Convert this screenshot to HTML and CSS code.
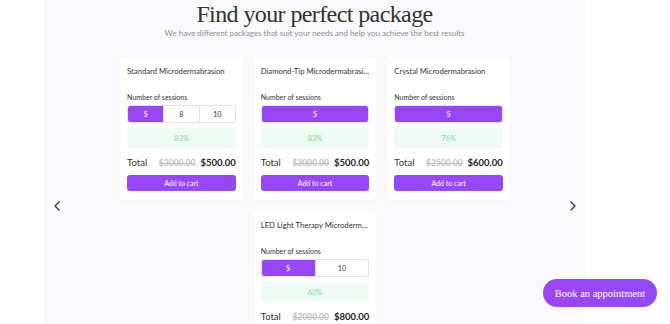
FILE: index.html
```html
<!DOCTYPE html>
<html lang="en">
<head>
    <meta charset="UTF-8">
    <meta name="viewport" content="width=device-width, initial-scale=1.0">
    <title>Packages</title>
    <link rel="stylesheet" href="styles.css">
</head>
<body>
    <div class="panel">
        <div class="header">
            <h1 class="page-title">Find your perfect package</h1>
            <p class="page-subtitle">We have different packages that suit your needs and help you achieve the best results</p>
        </div>

        <div class="carousel">
            <button class="arrow" aria-label="Previous">
                <svg width="10" height="14" viewBox="0 0 10 14"><path d="M7.5 2.5 L3 7 L7.5 11.5" fill="none" stroke="#333" stroke-width="1.3"/></svg>
            </button>

            <div class="cards">
                <div class="card">
                    <div class="card-title">Standard Microdermabrasion</div>
                    <div class="sessions-label">Number of sessions</div>
                    <div class="sessions">
                        <div class="session active">5</div>
                        <div class="session">8</div>
                        <div class="session">10</div>
                    </div>
                    <div class="discount">83%</div>
                    <div class="total-row">
                        <span class="total-label">Total</span>
                        <span class="prices"><s class="old-price">$3000.00</s><span class="price">$500.00</span></span>
                    </div>
                    <button class="cart-btn">Add to cart</button>
                </div>

                <div class="card">
                    <div class="card-title">Diamond-Tip Microdermabrasion Deluxe</div>
                    <div class="sessions-label">Number of sessions</div>
                    <div class="sessions">
                        <div class="session active">5</div>
                    </div>
                    <div class="discount">83%</div>
                    <div class="total-row">
                        <span class="total-label">Total</span>
                        <span class="prices"><s class="old-price">$3000.00</s><span class="price">$500.00</span></span>
                    </div>
                    <button class="cart-btn">Add to cart</button>
                </div>

                <div class="card">
                    <div class="card-title">Crystal Microdermabrasion</div>
                    <div class="sessions-label">Number of sessions</div>
                    <div class="sessions">
                        <div class="session active">5</div>
                    </div>
                    <div class="discount">76%</div>
                    <div class="total-row">
                        <span class="total-label">Total</span>
                        <span class="prices"><s class="old-price">$2500.00</s><span class="price">$600.00</span></span>
                    </div>
                    <button class="cart-btn">Add to cart</button>
                </div>

                <div class="card">
                    <div class="card-title">LED Light Therapy Microdermabrasion</div>
                    <div class="sessions-label">Number of sessions</div>
                    <div class="sessions">
                        <div class="session active">5</div>
                        <div class="session">10</div>
                    </div>
                    <div class="discount">60%</div>
                    <div class="total-row">
                        <span class="total-label">Total</span>
                        <span class="prices"><s class="old-price">$2000.00</s><span class="price">$800.00</span></span>
                    </div>
                    <button class="cart-btn">Add to cart</button>
                </div>
            </div>

            <button class="arrow" aria-label="Next">
                <svg width="10" height="14" viewBox="0 0 10 14"><path d="M2.5 2.5 L7 7 L2.5 11.5" fill="none" stroke="#333" stroke-width="1.3"/></svg>
            </button>
        </div>
    </div>

    <button class="book-btn">Book an appointment</button>
</body>
</html>
```

FILE: styles.css
```css
* {
    margin: 0;
    padding: 0;
    box-sizing: border-box;
}

body {
    font-family: 'Lato', sans-serif;
    color: #333;
    background: #fff;
    overflow: hidden;
}

.panel {
    margin-left: 44px;
    width: 541px;
    min-height: 324px;
    background: #f9f9fb;
}

.header {
    text-align: center;
}

.page-title {
    font-family: 'Liberation Serif', serif;
    font-weight: 400;
    font-size: 24px;
    letter-spacing: -0.6px;
    line-height: 28px;
    color: #333;
}

.page-subtitle {
    font-size: 8px;
    line-height: 10px;
    color: #8a8e9a;
}

.carousel {
    display: flex;
    align-items: center;
    justify-content: space-between;
    padding: 0 7px 0 8px;
    margin-top: 19px;
}

.arrow {
    background: none;
    border: none;
    width: 10px;
    height: 14px;
    display: flex;
}

.cards {
    width: 390px;
    display: flex;
    flex-wrap: wrap;
    justify-content: center;
    gap: 11px;
}

.card {
    width: 122.6px;
    background: #fff;
    border-radius: 4px;
    box-shadow: 0 1px 2px rgba(0, 0, 0, 0.03);
    padding: 7px 7px 9px 7px;
}

.card-title {
    font-size: 7.7px;
    line-height: 14px;
    color: #333;
    white-space: nowrap;
    overflow: hidden;
    text-overflow: ellipsis;
}

.sessions-label {
    font-size: 7px;
    line-height: 10px;
    margin-top: 14px;
    color: #333;
}

.sessions {
    display: flex;
    margin-top: 3px;
    height: 18px;
    border: 1px solid #e2e2e6;
    border-radius: 3px;
    overflow: hidden;
}

.session {
    flex: 1;
    display: flex;
    align-items: center;
    justify-content: center;
    font-size: 7px;
    color: #333;
    border-left: 1px solid #e2e2e6;
}

.session:first-child {
    border-left: none;
}

.session.active {
    background: #9747f3;
    color: #fff;
    font-weight: 700;
}

.discount {
    margin-top: 5px;
    height: 20px;
    border-radius: 3px;
    background: #eefaf3;
    color: #7fd5a3;
    font-size: 7.5px;
    display: flex;
    align-items: center;
    justify-content: center;
}

.total-row {
    display: flex;
    align-items: baseline;
    justify-content: space-between;
    margin-top: 8px;
    line-height: 14px;
}

.total-label {
    font-size: 9.5px;
    color: #333;
}

.prices {
    display: flex;
    align-items: baseline;
    gap: 5px;
}

.old-price {
    font-size: 8.5px;
    font-weight: 700;
    color: #c0c0c6;
}

.price {
    font-size: 9.5px;
    font-weight: 700;
    color: #222;
}

.cart-btn {
    display: block;
    width: 100%;
    height: 16px;
    margin-top: 5px;
    border: none;
    border-radius: 3px;
    background: #9747f3;
    color: #fff;
    font-family: 'Lato', sans-serif;
    font-size: 7px;
}

.book-btn {
    position: fixed;
    right: 13px;
    bottom: 17px;
    width: 114px;
    height: 28px;
    border: none;
    border-radius: 14px;
    background: linear-gradient(90deg, #9d45ef, #8f4bf6);
    color: #fff;
    font-family: 'Liberation Serif', serif;
    font-size: 10.5px;
}
```
